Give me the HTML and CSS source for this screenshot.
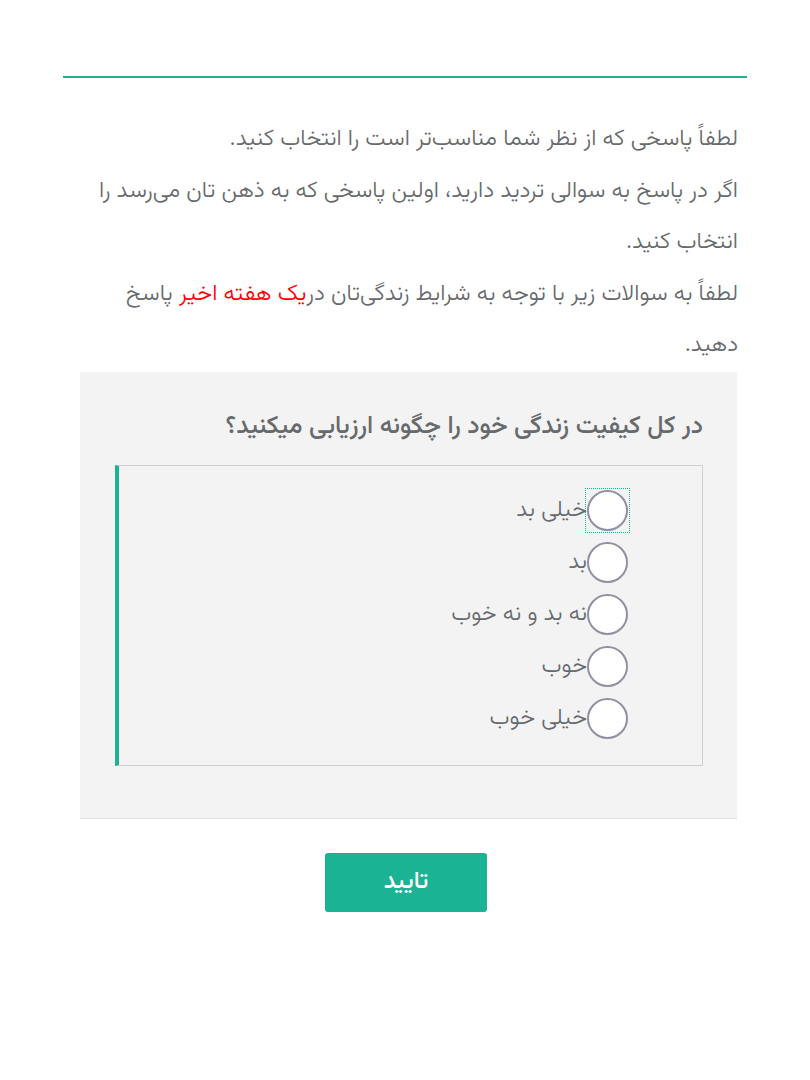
FILE: index.html
```html
<!DOCTYPE html>
<html lang="fa" dir="rtl">
<head>
<meta charset="utf-8">
<link rel="stylesheet" href="styles.css">
</head>
<body>
<div class="page">
  <div class="rule"></div>
  <div class="intro">
    <p>لطفاً پاسخی که از نظر شما مناسب‌تر است را انتخاب کنید.</p>
    <p>اگر در پاسخ به سوالی تردید دارید، اولین پاسخی که به ذهن تان می‌رسد را انتخاب کنید.</p>
    <p>لطفاً به سوالات زیر با توجه به شرایط زندگی‌تان در<span class="red">یک هفته اخیر</span> پاسخ دهید.</p>
  </div>
  <div class="question">
    <h2 class="qtitle">در کل کیفیت زندگی خود را چگونه ارزیابی میکنید؟</h2>
    <div class="options">
      <label class="opt"><span class="radio focus"></span><span class="lbl">خیلی بد</span></label>
      <label class="opt"><span class="radio"></span><span class="lbl">بد</span></label>
      <label class="opt"><span class="radio"></span><span class="lbl">نه بد و نه خوب</span></label>
      <label class="opt"><span class="radio"></span><span class="lbl">خوب</span></label>
      <label class="opt"><span class="radio"></span><span class="lbl">خیلی خوب</span></label>
    </div>
  </div>
  <div class="actions">
    <button class="btn">تایید</button>
  </div>
</div>
</body>
</html>
```
FILE: styles.css
```css
html, body {
  margin: 0;
  padding: 0;
  background: #fff;
}
body {
  font-family: "Vazirmatn", "Noto Sans Arabic", "DejaVu Sans", sans-serif;
  color: #676a6c;
}
.page {
  width: 684px;
  margin: 0 auto;
  padding-top: 76px;
}
.rule {
  height: 2px;
  background: #1ab394;
}
.intro {
  padding: 36px 9px 0 20px;
  font-size: 23px;
  font-weight: 300;
  line-height: 51.5px;
}
.intro p {
  margin: 0;
}
.red {
  color: #ff0000;
}
.question {
  margin: 0 10px 0 17px;
  background: #f3f3f3;
  border-bottom: 1px solid #e3e3e3;
  padding: 35px 34px 52px 35px;
}
.qtitle {
  margin: 0 0 18px 0;
  font-size: 25px;
  font-weight: 500;
  line-height: 40px;
  color: #676a6c;
}
.options {
  border: 1px solid #d0d0d0;
  border-left: 4px solid #1ab394;
  padding: 24px 74px 26px 0;
  display: flex;
  flex-direction: column;
  gap: 11px;
}
.opt {
  display: flex;
  align-items: center;
  font-size: 23px;
  font-weight: 300;
  line-height: 40px;
  color: #676a6c;
}
.radio {
  width: 41px;
  height: 41px;
  flex: none;
  display: flex;
}
.radio::before {
  content: "";
  flex: 1;
  border: 2px solid #928fa0;
  border-radius: 50%;
  background: #fff;
}
.radio.focus {
  outline: 1px dotted #1ab394;
  outline-offset: 1px;
}
.actions {
  display: flex;
  justify-content: center;
  padding-top: 34px;
}
.btn {
  width: 162px;
  height: 59px;
  border: none;
  border-radius: 3px;
  background: #1ab394;
  color: #fff;
  font-family: inherit;
  font-size: 24px;
  font-weight: 500;
  margin-left: 2px;
}
```
